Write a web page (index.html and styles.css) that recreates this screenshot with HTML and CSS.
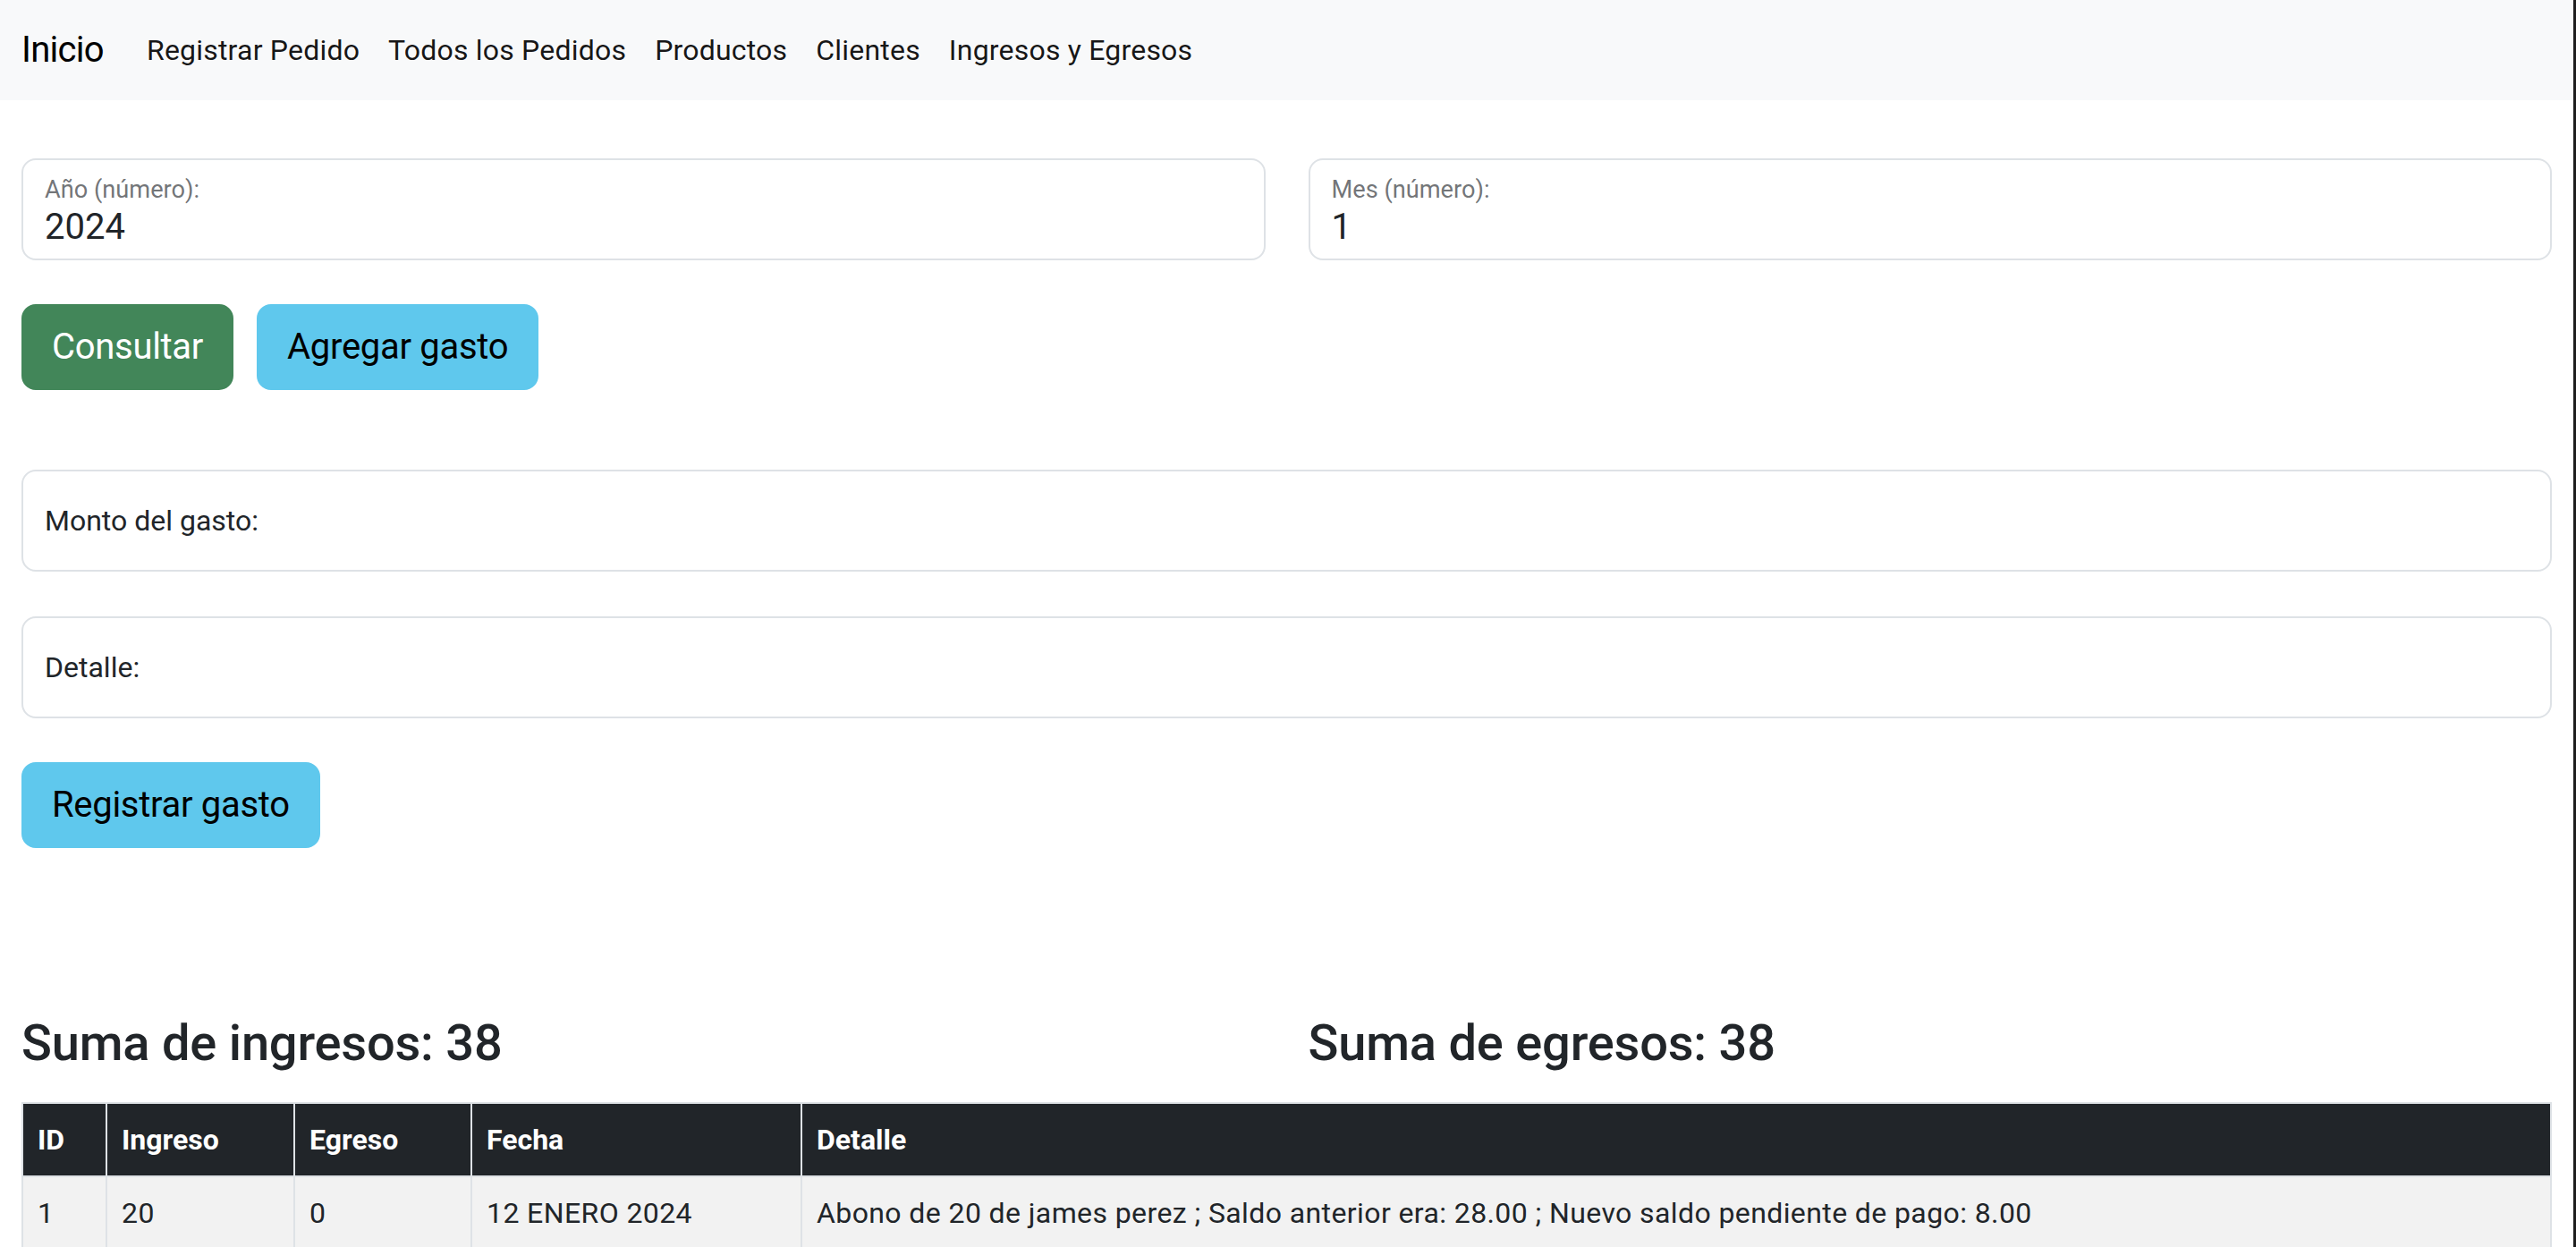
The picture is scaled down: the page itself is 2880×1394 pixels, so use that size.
FILE: index.html
```html
<!DOCTYPE html>
<html lang="es">
<head>
<meta charset="utf-8">
<title>Ingresos y Egresos</title>
<link rel="stylesheet" href="styles.css">
</head>
<body>
<nav class="navbar">
  <a class="brand" href="#">Inicio</a>
  <ul class="nav-links">
    <li><a href="#">Registrar Pedido</a></li>
    <li><a href="#">Todos los Pedidos</a></li>
    <li><a href="#">Productos</a></li>
    <li><a href="#">Clientes</a></li>
    <li><a href="#">Ingresos y Egresos</a></li>
  </ul>
</nav>
<main class="page">
  <form class="query">
    <div class="pair">
      <div class="field">
        <input id="anio" type="text" inputmode="numeric" value="2024">
        <label for="anio">Año (número):</label>
      </div>
      <div class="field">
        <input id="mes" type="text" inputmode="numeric" value="1">
        <label for="mes">Mes (número):</label>
      </div>
    </div>
    <div class="actions">
      <button type="button" class="btn btn-success">Consultar</button>
      <button type="button" class="btn btn-info">Agregar gasto</button>
    </div>
    <div class="field empty monto">
      <input id="monto" type="text">
      <label for="monto">Monto del gasto:</label>
    </div>
    <div class="field empty detalle">
      <input id="detalle" type="text">
      <label for="detalle">Detalle:</label>
    </div>
    <div class="submit-row">
      <button type="button" class="btn btn-info">Registrar gasto</button>
    </div>
  </form>
  <div class="pair totals">
    <h3>Suma de ingresos: 38</h3>
    <h3>Suma de egresos: 38</h3>
  </div>
  <table class="ledger">
    <colgroup>
      <col class="c-id"><col class="c-in"><col class="c-eg"><col class="c-fe"><col>
    </colgroup>
    <thead>
      <tr><th>ID</th><th>Ingreso</th><th>Egreso</th><th>Fecha</th><th>Detalle</th></tr>
    </thead>
    <tbody>
      <tr><td>1</td><td>20</td><td>0</td><td>12 ENERO 2024</td><td>Abono de 20 de james perez ; Saldo anterior era: 28.00 ; Nuevo saldo pendiente de pago: 8.00</td></tr>
    </tbody>
  </table>
</main>
</body>
</html>
```
FILE: styles.css
```css
html {
  font-size: 32px;
}

body {
  margin: 0;
  min-height: 100vh;
  box-sizing: border-box;
  border-right: 3px solid #1e1e1e;
  font-family: Roboto, "Liberation Sans", sans-serif;
  font-size: 32px;
  line-height: 1.5;
  color: #212529;
  background: #fff;
}

/* Navbar */
.navbar {
  display: flex;
  align-items: center;
  background: #f8f9fa;
  padding: 16px 24px;
}

.brand {
  font-size: 40px;
  line-height: 60px;
  padding: 10px 0;
  margin-right: 32px;
  letter-spacing: -0.7px;
  color: #000;
  text-decoration: none;
}

.nav-links {
  display: flex;
  list-style: none;
  margin: 0;
  padding: 0;
}

.nav-links a {
  display: block;
  padding: 16px;
  font-size: 32px;
  line-height: 48px;
  letter-spacing: 0.2px;
  color: rgba(0, 0, 0, 0.92);
  text-decoration: none;
}

/* Page */
.page {
  padding: 65px 24px 0;
}

.pair {
  display: grid;
  grid-template-columns: 1fr 1fr;
  column-gap: 48px;
}

.field {
  position: relative;
}

.field input {
  display: block;
  width: 100%;
  box-sizing: border-box;
  height: 114px;
  margin: 0;
  border: 2px solid #dee2e6;
  border-radius: 16px;
  background: #fff;
  font-family: inherit;
  font-size: 40px;
  line-height: 1.5;
  color: #212529;
  padding: 46px 24px 8px;
  outline: none;
}

.field label {
  position: absolute;
  left: 26px;
  top: 15px;
  font-size: 27.2px;
  line-height: 1.5;
  color: rgba(33, 37, 41, 0.65);
  pointer-events: none;
}

.field.empty label {
  top: 33px;
  font-size: 32px;
  color: #212529;
}

.actions {
  display: flex;
  gap: 26px;
  margin: 49px 0 89px;
}

.btn {
  font-family: inherit;
  font-size: 40px;
  line-height: 60px;
  padding: 16px 32px;
  border: 2px solid transparent;
  border-radius: 16px;
  letter-spacing: -0.3px;
  cursor: pointer;
}

.btn-success {
  background: #428659;
  border-color: #428659;
  color: #fff;
}

.btn-info {
  background: #5fc8ed;
  border-color: #5fc8ed;
  color: #000;
}

.monto {
  margin-bottom: 50px;
}

.detalle {
  margin-bottom: 49px;
}

.submit-row {
  margin-bottom: 185px;
}

.totals {
  margin-bottom: 32px;
}

.totals h3 {
  margin: 0;
  font-size: 56px;
  font-weight: 500;
  line-height: 1.2;
  letter-spacing: -0.2px;
  color: #212529;
}

/* Table */
.ledger {
  width: 100%;
  table-layout: fixed;
  border-collapse: collapse;
  font-size: 32px;
}

.c-id { width: 94px; }
.c-in { width: 210px; }
.c-eg { width: 198px; }
.c-fe { width: 369px; }

.ledger th,
.ledger td {
  border: 2px solid #dee2e6;
  padding: 16px;
  line-height: 48px;
  text-align: left;
  white-space: nowrap;
}

.ledger thead th {
  background: #212529;
  color: #fff;
  font-weight: 700;
}

.ledger tbody td {
  letter-spacing: 0.4px;
}

.ledger tbody tr:nth-child(odd) td {
  background: #f2f2f2;
  color: #212529;
}
```
